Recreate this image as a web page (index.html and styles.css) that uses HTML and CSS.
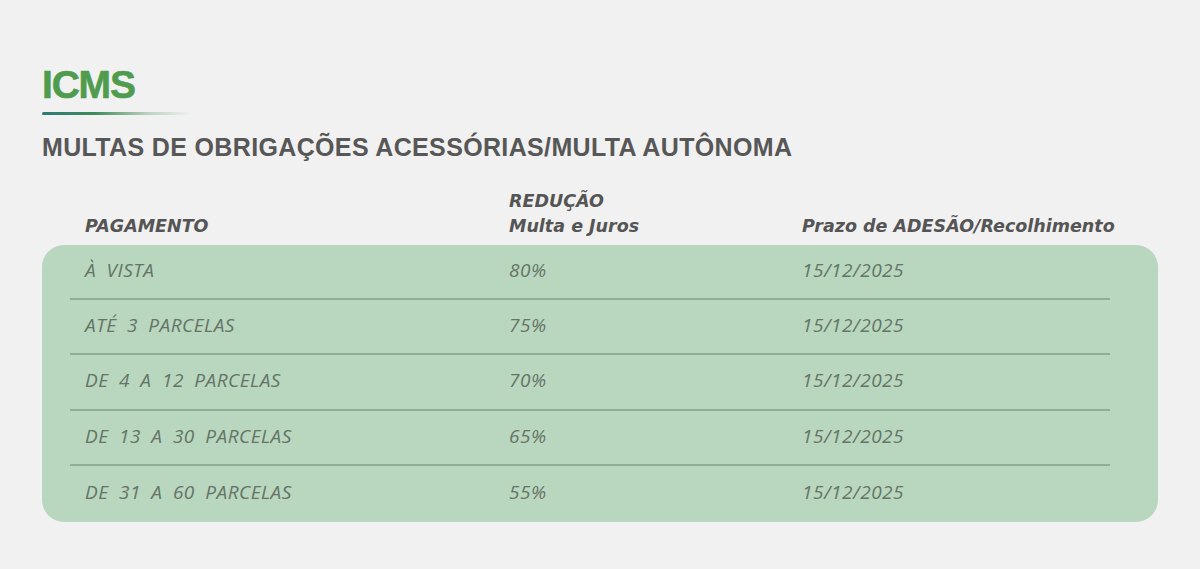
FILE: index.html
```html
<!DOCTYPE html>
<html lang="pt-BR">
<head>
<meta charset="utf-8">
<title>ICMS</title>
<link rel="stylesheet" href="styles.css">
</head>
<body>
<main class="page">
  <h1 class="title">ICMS</h1>
  <div class="title-bar"></div>
  <h2 class="subtitle">MULTAS DE OBRIGAÇÕES ACESSÓRIAS/MULTA AUTÔNOMA</h2>
  <div class="table">
    <div class="head">
      <div class="hcell">PAGAMENTO</div>
      <div class="hcell">REDUÇÃO<br>Multa e Juros</div>
      <div class="hcell">Prazo de ADESÃO/Recolhimento</div>
    </div>
    <div class="body">
      <div class="row"><div class="cell">À VISTA</div><div class="cell">80%</div><div class="cell">15/12/2025</div></div>
      <div class="row"><div class="cell">ATÉ 3 PARCELAS</div><div class="cell">75%</div><div class="cell">15/12/2025</div></div>
      <div class="row"><div class="cell">DE 4 A 12 PARCELAS</div><div class="cell">70%</div><div class="cell">15/12/2025</div></div>
      <div class="row"><div class="cell">DE 13 A 30 PARCELAS</div><div class="cell">65%</div><div class="cell">15/12/2025</div></div>
      <div class="row last"><div class="cell">DE 31 A 60 PARCELAS</div><div class="cell">55%</div><div class="cell">15/12/2025</div></div>
    </div>
  </div>
</main>
</body>
</html>
```
FILE: styles.css
```css
* { box-sizing: border-box; }
html, body { margin: 0; padding: 0; }
body {
  background: #f1f1f1;
  width: 1200px;
  height: 569px;
  overflow: hidden;
  font-family: "Open Sans", "Liberation Sans", sans-serif;
}
.page {
  padding: 62px 42px 0 42px;
}
.title {
  margin: 0;
  font-family: "Liberation Sans", sans-serif;
  font-weight: 700;
  font-size: 39px;
  line-height: 46px;
  color: #4f9c4f;
  letter-spacing: -1.2px;
  -webkit-text-stroke: 0.6px #4f9c4f;
}
.title-bar {
  margin-top: 4px;
  width: 150px;
  height: 3px;
  border-radius: 2px;
  background: linear-gradient(to right, #2c7c78 0%, #3f8a5a 35%, rgba(120,170,130,0.45) 70%, rgba(240,240,240,0) 100%);
}
.subtitle {
  margin: 17px 0 0 0;
  font-family: "Liberation Sans", sans-serif;
  font-weight: 700;
  font-size: 25px;
  line-height: 30px;
  color: #575757;
  letter-spacing: 0.35px;
}
.table {
  margin-top: 27px;
}
.head, .row {
  display: grid;
  grid-template-columns: 424px 293px 1fr;
}
.head {
  padding-left: 43px;
  align-items: end;
  margin-bottom: 6px;
}
.hcell {
  font-family: "DejaVu Sans", sans-serif;
  font-style: italic;
  font-weight: 700;
  font-size: 17.5px;
  line-height: 25px;
  color: #555;
}
.body {
  background: #b9d6bf;
  border-radius: 22px;
  padding: 0 48px 0 28px;
}
.row {
  padding-left: 15px;
  height: 55px;
  align-items: center;
  border-bottom: 2px solid #8fae95;
}
.row:nth-child(3) {
  height: 56px;
}
.row.last {
  border-bottom: none;
  height: 56px;
}
.cell {
  font-style: italic;
  font-size: 19px;
  letter-spacing: 0.5px;
  word-spacing: 5px;
  color: #647466;
  padding-bottom: 4px;
}
```
